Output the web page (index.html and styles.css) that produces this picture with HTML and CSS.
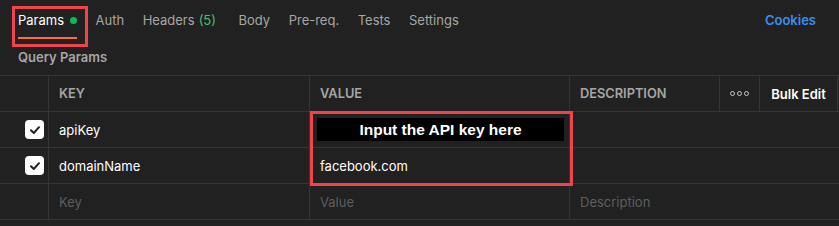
FILE: index.html
```html
<!DOCTYPE html>
<html lang="en">
<head>
<meta charset="UTF-8">
<title>Params</title>
<link rel="stylesheet" href="styles.css">
</head>
<body>

<div class="tabs">
  <div class="tab active">Params <span class="dot"></span></div>
  <div class="tab">Auth</div>
  <div class="tab headers">Headers <span class="count">(5)</span></div>
  <div class="tab">Body</div>
  <div class="tab">Pre-req.</div>
  <div class="tab">Tests</div>
  <div class="tab">Settings</div>
  <div class="cookies">Cookies</div>
  <div class="mark mark-tab"></div>
</div>

<div class="section-title">Query Params</div>

<div class="table">
  <div class="row head">
    <div class="cell check"></div>
    <div class="cell">KEY</div>
    <div class="cell">VALUE</div>
    <div class="cell">DESCRIPTION</div>
    <div class="cell center more"><span></span><span></span><span></span></div>
    <div class="cell center bulk">Bulk Edit</div>
    <div class="cell filler"></div>
  </div>
  <div class="row">
    <div class="cell check"><span class="box"><svg width="12" height="12" viewBox="0 0 12 12"><path d="M2 6.3 L4.8 9 L10 3.2" fill="none" stroke="#212121" stroke-width="2" stroke-linecap="round" stroke-linejoin="round"/></svg></span></div>
    <div class="cell">apiKey</div>
    <div class="cell"></div>
    <div class="cell desc"></div>
  </div>
  <div class="row">
    <div class="cell check"><span class="box"><svg width="12" height="12" viewBox="0 0 12 12"><path d="M2 6.3 L4.8 9 L10 3.2" fill="none" stroke="#212121" stroke-width="2" stroke-linecap="round" stroke-linejoin="round"/></svg></span></div>
    <div class="cell">domainName</div>
    <div class="cell">facebook.com</div>
    <div class="cell desc"></div>
  </div>
  <div class="row empty">
    <div class="cell check"></div>
    <div class="cell">Key</div>
    <div class="cell">Value</div>
    <div class="cell desc">Description</div>
  </div>

  <div class="redact">Input the API key here</div>
  <div class="mark mark-value"></div>
</div>

</body>
</html>
```

FILE: styles.css
```css
body {
  margin: 0;
  background-color: #212121;
  font-family: 'Inter', 'Noto Sans', sans-serif;
  font-size: 13px;
  color: #ffffff;
}

/* tab strip */
.tabs {
  position: relative;
  display: flex;
  align-items: flex-start;
  gap: 18.5px;
  padding: 0 23px 0 18px;
  height: 39px;
}
.tab {
  display: flex;
  align-items: center;
  line-height: 16px;
  padding: 12px 0 9px;
  color: #a6a6a6;
  border-bottom: 2px solid transparent;
}
.tab.active {
  color: #ffffff;
  border-bottom-color: #ff6c37;
}
.tab.headers {
  margin-right: 4px;
}
.dot {
  display: inline-block;
  width: 7px;
  height: 7px;
  margin-left: 6px;
  border-radius: 50%;
  background-color: #0cbb52;
}
.count {
  margin-left: 4px;
  color: #45c26a;
}
.cookies {
  margin-left: auto;
  line-height: 16px;
  padding-top: 12px;
  font-weight: 600;
  color: #3d8ef0;
}

.section-title {
  padding: 10px 18px 0;
  line-height: 16px;
  height: 36px;
  box-sizing: border-box;
  font-weight: 600;
  color: #a6a6a6;
}

/* params table */
.table {
  position: relative;
  border-top: 1px solid #353535;
}
.row {
  display: grid;
  grid-template-columns: 48px 261px 260px 150px 40px 78px 1fr;
  height: 36px;
  box-sizing: border-box;
  border-bottom: 1px solid #353535;
}
.cell {
  display: flex;
  align-items: center;
  padding: 0 10px;
  border-left: 1px solid #353535;
  white-space: nowrap;
}
.cell.check {
  border-left: none;
  justify-content: flex-end;
  padding: 0 4px 0 0;
}
.cell.desc {
  grid-column: 4 / 8;
}
.head .cell {
  font-size: 12.8px;
  font-weight: 600;
  color: #a6a6a6;
}
.head .cell.center {
  justify-content: center;
  padding: 0;
}
.head .cell.bulk {
  color: #ffffff;
  font-size: 13px;
}
.head .cell.filler {
  padding: 0;
}
.more span {
  width: 3px;
  height: 3px;
  margin: 0 1px;
  border: 1px solid #c8c8c8;
  border-radius: 50%;
}
.empty .cell {
  color: #5e5e5e;
}
.box {
  display: flex;
  align-items: center;
  justify-content: center;
  width: 19px;
  height: 19px;
  border-radius: 4px;
  background-color: #ffffff;
}

/* annotations drawn over the screenshot */
.mark {
  position: absolute;
  border: 3px solid #f0434b;
  box-sizing: border-box;
}
.mark-tab {
  left: 12px;
  top: 6px;
  width: 76px;
  height: 41px;
}
.mark-value {
  left: 310px;
  top: 35px;
  width: 263px;
  height: 75px;
}
.redact {
  position: absolute;
  left: 317px;
  top: 42px;
  width: 247px;
  height: 23px;
  background-color: #000000;
  color: #ffffff;
  font-family: 'Liberation Sans', Arial, sans-serif;
  font-weight: 700;
  font-size: 15.5px;
  line-height: 23px;
  text-align: center;
}
```
